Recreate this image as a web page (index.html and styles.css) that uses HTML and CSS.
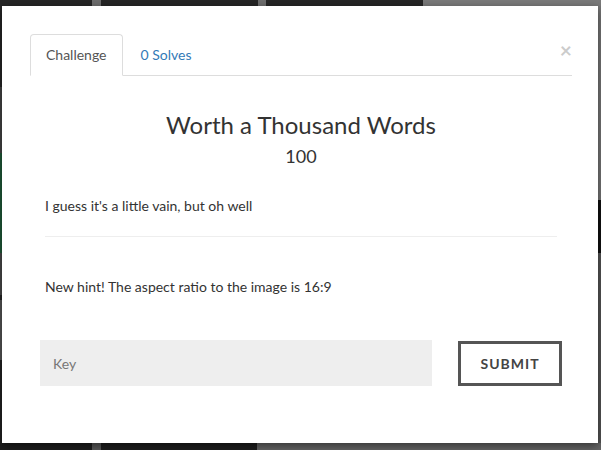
FILE: index.html
```html
<!DOCTYPE html>
<html>
<head>
<meta charset="utf-8">
<link rel="stylesheet" href="styles.css">
</head>
<body>
<div class="modal">
  <button class="close" aria-label="Close">&times;</button>
  <ul class="tabs">
    <li class="tab active">Challenge</li>
    <li class="tab link">0 Solves</li>
  </ul>
  <div class="pane">
    <h3 class="title">Worth a Thousand Words</h3>
    <div class="value">100</div>
    <p class="desc">I guess it's a little vain, but oh well</p>
    <hr class="sep">
    <p class="hint">New hint! The aspect ratio to the image is 16:9</p>
    <form class="submit-row">
      <input class="key" type="text" placeholder="Key">
      <button class="submit" type="button">SUBMIT</button>
    </form>
  </div>
</div>
</body>
</html>
```
FILE: styles.css
```css
html, body {
  margin: 0;
  padding: 0;
  height: 450px;
  overflow: hidden;
}
body {
  font-family: Lato, "Open Sans", sans-serif;
  color: #333;
  background-color: #262626;
  background-image:
    linear-gradient(to right, transparent 92px, #6e6e6e 92px, #6e6e6e 101px, transparent 101px, transparent 258px, #6e6e6e 258px, #6e6e6e 266px, transparent 266px, transparent 423px, #7a7a7a 423px),
    linear-gradient(to bottom, #262626 87px, #444 87px, #444 153px, #1f5a38 153px, #1f5a38 253px, #4a4a4a 253px, #4a4a4a 295px, #262626 295px, #262626 300px, #555 300px, #555 360px, #222 360px),
    linear-gradient(to bottom, #777 200px, #111 200px, #111 253px, #555 253px);
  background-size: 601px 6px, 2px 450px, 3px 450px;
  background-position: 0 0, 0 0, 598px 0;
  background-repeat: no-repeat;
  padding-top: 6px;
  box-sizing: border-box;
  position: relative;
}
body::after {
  content: "";
  display: block;
  height: 7px;
  background: linear-gradient(to right, #1e1e1e 92px, #5a5a5a 92px, #5a5a5a 101px, #1e1e1e 101px, #1e1e1e 257px, #666 257px);
}
.modal {
  position: relative;
  margin: 0 3px 0 2px;
  height: 437px;
  background: #fff;
  box-shadow: 0 3px 9px rgba(0,0,0,0.5);
  box-sizing: border-box;
  padding: 28px 26px 0 28px;
}
.close {
  position: absolute;
  top: 33px;
  right: 26px;
  border: 0;
  background: none;
  padding: 0;
  font-family: Lato, sans-serif;
  font-size: 21px;
  font-weight: 700;
  line-height: 1;
  color: #000;
  opacity: 0.2;
  cursor: pointer;
}
.tabs {
  list-style: none;
  margin: 0;
  padding: 0;
  display: flex;
  border-bottom: 1px solid #ddd;
}
.tab {
  font-size: 14px;
  line-height: 20px;
  padding: 10px 15px;
  margin-bottom: -1px;
  border: 1px solid transparent;
  border-radius: 4px 4px 0 0;
  margin-right: 2px;
}
.tab.active {
  color: #555;
  border-color: #ddd;
  border-bottom-color: #fff;
  background: #fff;
}
.tab.link {
  color: #337ab7;
}
.pane {
  padding: 0 15px;
}
.title {
  margin: 35px 0 0 0;
  text-align: center;
  font-weight: 400;
  font-size: 24px;
  line-height: 28px;
}
.value {
  text-align: center;
  font-size: 18px;
  line-height: 22px;
  margin-top: 6px;
}
.desc, .hint {
  font-size: 14px;
  line-height: 20px;
  margin: 0;
}
.desc {
  margin-top: 29px;
}
.sep {
  border: 0;
  border-top: 1px solid #eee;
  margin: 20px 0 0 0;
}
.hint {
  margin-top: 40px;
}
.submit-row {
  display: flex;
  justify-content: space-between;
  align-items: center;
  margin: 43px -5px 0 -5px;
}
.key {
  width: 392px;
  height: 46px;
  box-sizing: border-box;
  border: 0;
  background: #eee;
  padding: 0 13px;
  font-family: Lato, sans-serif;
  font-size: 14px;
  color: #555;
  outline: none;
}
.key::placeholder {
  color: #777;
}
.submit {
  width: 104px;
  height: 45px;
  box-sizing: border-box;
  border: 3px solid #555;
  background: #fff;
  font-family: Lato, sans-serif;
  font-weight: 700;
  font-size: 14px;
  letter-spacing: 1px;
  color: #444;
  padding: 0;
}
```
